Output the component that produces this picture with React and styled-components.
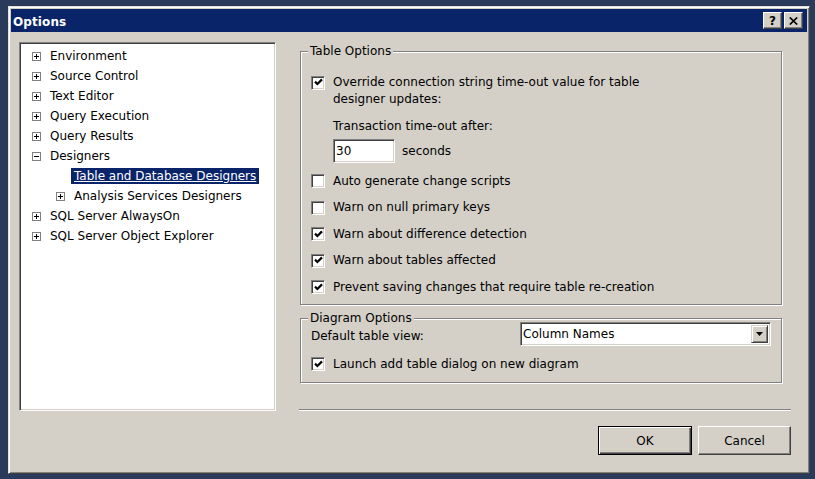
import React from "react";
import styled, { createGlobalStyle, css } from "styled-components";

const GlobalStyle = createGlobalStyle`
  html, body, #root { margin: 0; padding: 0; height: 100%; }
  body {
    overflow: hidden;
    font-family: "DejaVu Sans", Tahoma, Verdana, sans-serif;
    font-size: 12px;
    color: #000;
  }
  * { box-sizing: border-box; }
`;

const FACE = "#d4d0c8";

const raised = css`
  border: 1px solid;
  border-color: #ffffff #404040 #404040 #ffffff;
  box-shadow: inset -1px -1px 0 #808080;
`;

const sunken = css`
  border: 1px solid;
  border-color: #808080 #ffffff #ffffff #808080;
  box-shadow: inset 1px 1px 0 #404040, inset -1px -1px 0 ${FACE};
`;

const Desktop = styled.div`
  height: 100%;
  display: flex;
  background: #293a5b;
  padding: 6px 5px 5px 8px;
`;

const Window = styled.div`
  flex: 1;
  display: flex;
  flex-direction: column;
  background: ${FACE};
  border: 1px solid;
  border-color: #e4e1db #404040 #404040 #e4e1db;
  box-shadow: inset 1px 1px 0 #ffffff, inset -1px -1px 0 #808080;
  padding: 2px;
`;

const TitleBar = styled.div`
  height: 23px;
  flex: none;
  display: flex;
  align-items: center;
  justify-content: space-between;
  background: #0a246a;
  padding: 0 4px 0 2px;
`;

const Title = styled.span`
  color: #ffffff;
  font-weight: bold;
  font-size: 12px;
  letter-spacing: 0.1px;
  padding-top: 2px;
`;

const CaptionButtons = styled.div`
  display: flex;
  gap: 2px;
`;

const CaptionButton = styled.button`
  ${raised};
  width: 19px;
  height: 17px;
  padding: 0;
  background: ${FACE};
  display: flex;
  align-items: center;
  justify-content: center;
  font-family: inherit;
  font-weight: bold;
  font-size: 12px;
  line-height: 1;
  color: #000;
`;

const Body = styled.div`
  flex: 1;
  display: flex;
  flex-direction: column;
  padding: 10px 16px 0 8px;
`;

const Main = styled.div`
  display: flex;
  gap: 23px;
  height: 369px;
`;

const Tree = styled.ul`
  ${sunken};
  width: 257px;
  flex: none;
  margin: 0;
  padding: 3px 1px 1px;
  list-style: none;
  background: #ffffff;
`;

const TreeRow = styled.li`
  height: 20px;
  display: flex;
  align-items: center;
  padding-left: ${(p) => 11 + (p.$level - 1) * 24}px;
  white-space: nowrap;
`;

const ExpanderSlot = styled.span`
  width: 9px;
  height: 9px;
  margin-right: 6px;
  flex: none;
  display: flex;
`;

const TreeLabel = styled.span`
  padding: 0 3px;
  line-height: 16px;
  ${(p) =>
    p.$selected &&
    css`
      background: #0a246a;
      color: #ffffff;
      text-decoration: underline;
    `}
`;

const Pane = styled.div`
  flex: 1;
  display: flex;
  flex-direction: column;
`;

const GroupBox = styled.fieldset`
  margin: ${(p) => p.$top}px 9px 0 1px;
  padding: ${(p) => p.$padTop}px 10px ${(p) => p.$padBottom}px;
  border: 1px solid #808080;
  box-shadow: 1px 1px 0 #ffffff, inset 1px 1px 0 #ffffff;
  min-width: 0;
`;

const Legend = styled.legend`
  margin-left: -3px;
  padding: 0 2px;
  line-height: 14px;
  background: ${FACE};
`;

const CheckRow = styled.label`
  display: flex;
  align-items: flex-start;
  gap: 8px;
  line-height: 17px;
  margin-top: ${(p) => p.$mt}px;
`;

const CheckBoxFrame = styled.span`
  ${sunken};
  width: 14px;
  height: 14px;
  flex: none;
  margin-top: 1.5px;
  background: #ffffff;
  display: flex;
  align-items: center;
  justify-content: center;
`;

const Indented = styled.div`
  margin-left: 22px;
`;

const TextLine = styled.div`
  line-height: 17px;
  margin-top: ${(p) => p.$mt || 0}px;
`;

const InputRow = styled.div`
  display: flex;
  align-items: center;
  gap: 7px;
  margin-top: 4px;
`;

const TextBox = styled.div`
  ${sunken};
  width: 62px;
  height: 24px;
  background: #ffffff;
  padding: 0 2px;
  display: flex;
  align-items: center;
`;

const ComboRow = styled.div`
  display: flex;
  align-items: center;
  margin-top: -3px;
`;

const ComboLabel = styled.span`
  flex: 1;
  line-height: 14px;
  align-self: flex-start;
  margin-top: 7px;
`;

const Combo = styled.div`
  ${sunken};
  width: 251px;
  height: 24px;
  background: #ffffff;
  padding: 2px;
  display: flex;
  align-items: stretch;
`;

const ComboText = styled.span`
  flex: 1;
  display: flex;
  align-items: center;
`;

const DropButton = styled.span`
  width: 17px;
  flex: none;
  border: 1px solid;
  border-color: ${FACE} #404040 #404040 ${FACE};
  box-shadow: inset 1px 1px 0 #ffffff, inset -1px -1px 0 #808080;
  background: ${FACE};
  display: flex;
  align-items: center;
  justify-content: center;
`;

const Separator = styled.div`
  margin-top: auto;
  height: 2px;
  border-top: 1px solid #808080;
  border-bottom: 1px solid #ffffff;
`;

const Footer = styled.div`
  display: flex;
  justify-content: flex-end;
  gap: 6px;
  margin-top: 15px;
`;

const PushButton = styled.button`
  width: ${(p) => p.$w}px;
  height: 29px;
  padding: 0;
  background: ${FACE};
  font-family: inherit;
  font-size: 12px;
  color: #000;
  ${(p) =>
    p.$default
      ? css`
          border: 1px solid #000000;
          box-shadow: inset 1px 1px 0 #ffffff, inset -1px -1px 0 #404040,
            inset -2px -2px 0 #808080;
        `
      : raised}
`;

function Expander({ open }) {
  return (
    <ExpanderSlot>
      <svg width="9" height="9" viewBox="0 0 9 9">
        <rect x="0.5" y="0.5" width="8" height="8" fill="#fff" stroke="#808080" />
        <line x1="2" y1="4.5" x2="7" y2="4.5" stroke="#000" />
        {!open && <line x1="4.5" y1="2" x2="4.5" y2="7" stroke="#000" />}
      </svg>
    </ExpanderSlot>
  );
}

function CheckBox({ checked }) {
  return (
    <CheckBoxFrame>
      {checked && (
        <svg width="9" height="9" viewBox="0 0 9 9">
          <path d="M1 3.6 L3.4 6 L8 1.4" fill="none" stroke="#000" strokeWidth="2.2" />
        </svg>
      )}
    </CheckBoxFrame>
  );
}

const treeItems = [
  { label: "Environment", level: 1, exp: "closed" },
  { label: "Source Control", level: 1, exp: "closed" },
  { label: "Text Editor", level: 1, exp: "closed" },
  { label: "Query Execution", level: 1, exp: "closed" },
  { label: "Query Results", level: 1, exp: "closed" },
  { label: "Designers", level: 1, exp: "open" },
  { label: "Table and Database Designers", level: 2, exp: null, selected: true },
  { label: "Analysis Services Designers", level: 2, exp: "closed" },
  { label: "SQL Server AlwaysOn", level: 1, exp: "closed" },
  { label: "SQL Server Object Explorer", level: 1, exp: "closed" },
];

const tableChecks = [
  { label: "Auto generate change scripts", checked: false },
  { label: "Warn on null primary keys", checked: false },
  { label: "Warn about difference detection", checked: true },
  { label: "Warn about tables affected", checked: true },
  { label: "Prevent saving changes that require table re-creation", checked: true },
];

export default function App() {
  return (
    <>
      <GlobalStyle />
      <Desktop>
        <Window>
          <TitleBar>
            <Title>Options</Title>
            <CaptionButtons>
              <CaptionButton>?</CaptionButton>
              <CaptionButton>
                <svg width="9" height="8" viewBox="0 0 9 8">
                  <path d="M0.8 0.5 L8.2 7.5 M8.2 0.5 L0.8 7.5" stroke="#000" strokeWidth="1.7" />
                </svg>
              </CaptionButton>
            </CaptionButtons>
          </TitleBar>
          <Body>
            <Main>
              <Tree>
                {treeItems.map((it) => (
                  <TreeRow key={it.label} $level={it.level}>
                    {it.exp ? <Expander open={it.exp === "open"} /> : <ExpanderSlot />}
                    <TreeLabel $selected={it.selected}>{it.label}</TreeLabel>
                  </TreeRow>
                ))}
              </Tree>
              <Pane>
                <GroupBox $top={2} $padTop={16} $padBottom={8}>
                  <Legend>Table Options</Legend>
                  <CheckRow $mt={0}>
                    <CheckBox checked />
                    <span>
                      Override connection string time-out value for table
                      <br />
                      designer updates:
                    </span>
                  </CheckRow>
                  <Indented>
                    <TextLine $mt={10}>Transaction time-out after:</TextLine>
                    <InputRow>
                      <TextBox>30</TextBox>
                      <span>seconds</span>
                    </InputRow>
                  </Indented>
                  {tableChecks.map((c) => (
                    <CheckRow key={c.label} $mt={9.5}>
                      <CheckBox checked={c.checked} />
                      <span>{c.label}</span>
                    </CheckRow>
                  ))}
                </GroupBox>
                <GroupBox $top={6.5} $padTop={0} $padBottom={9}>
                  <Legend>Diagram Options</Legend>
                  <ComboRow>
                    <ComboLabel>Default table view:</ComboLabel>
                    <Combo>
                      <ComboText>Column Names</ComboText>
                      <DropButton>
                        <svg width="7" height="4" viewBox="0 0 7 4">
                          <path d="M0 0 H7 L3.5 4 Z" fill="#000" />
                        </svg>
                      </DropButton>
                    </Combo>
                  </ComboRow>
                  <CheckRow $mt={9.5}>
                    <CheckBox checked />
                    <span>Launch add table dialog on new diagram</span>
                  </CheckRow>
                </GroupBox>
                <Separator />
              </Pane>
            </Main>
            <Footer>
              <PushButton $default $w={94}>OK</PushButton>
              <PushButton $w={93}>Cancel</PushButton>
            </Footer>
          </Body>
        </Window>
      </Desktop>
    </>
  );
}
